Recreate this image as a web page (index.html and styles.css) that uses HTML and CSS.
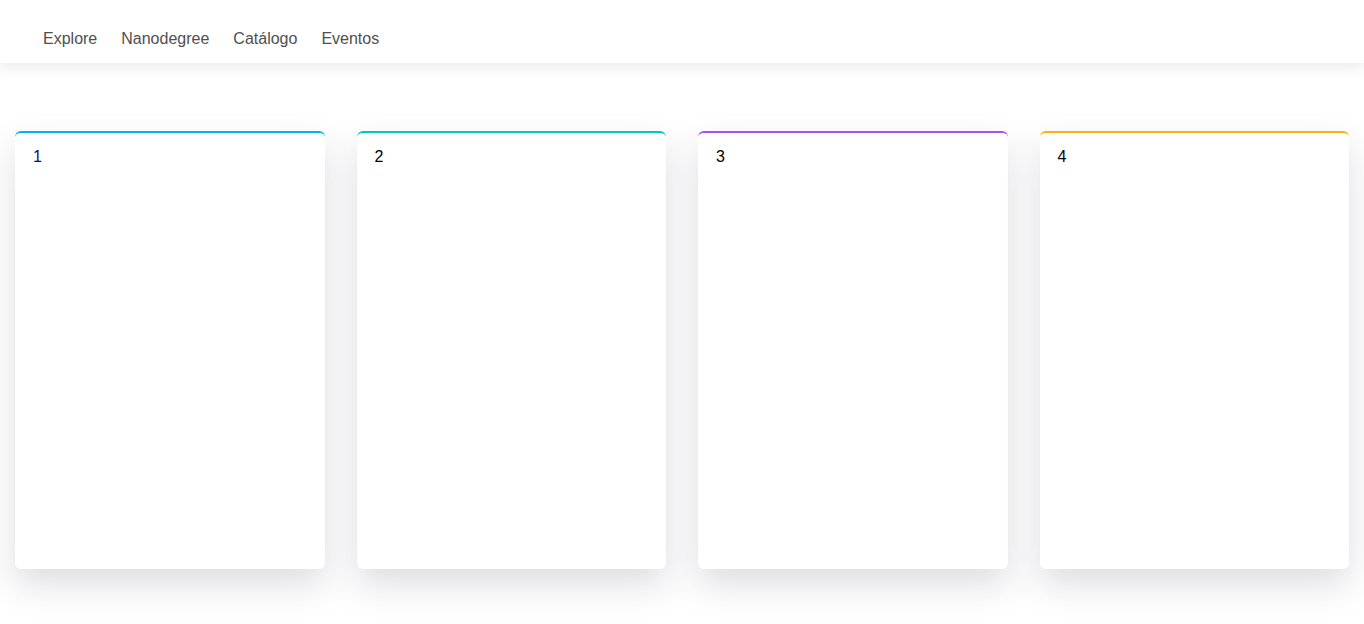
FILE: index.html
```html
<!DOCTYPE html>
<html lang="pt">
<head>
<meta charset="utf-8">
<title>Cards</title>
<link rel="stylesheet" href="styles.css">
</head>
<body>
<header class="nav">
  <a class="nav-link" href="#">Explore</a>
  <a class="nav-link" href="#">Nanodegree</a>
  <a class="nav-link" href="#">Catálogo</a>
  <a class="nav-link" href="#">Eventos</a>
</header>
<main class="cards">
  <section class="card card-blue"><span class="num num-first">1</span></section>
  <section class="card card-teal"><span class="num">2</span></section>
  <section class="card card-purple"><span class="num">3</span></section>
  <section class="card card-orange"><span class="num">4</span></section>
</main>
</body>
</html>
```
FILE: styles.css
```css
* { box-sizing: border-box; }
html, body { margin: 0; padding: 0; background: #fff; }
body { font-family: "Liberation Sans", Arial, sans-serif; font-size: 16px; min-height: 624px; }

.nav {
  height: 63px;
  display: flex;
  align-items: center;
  gap: 24px;
  padding: 15px 0 0 43px;
  background: #fff;
  box-shadow: 0 4px 14px rgba(40, 40, 70, 0.10);
  position: relative;
  z-index: 1;
}
.nav-link {
  color: #4f4f4f;
  text-decoration: none;
  font-size: 16px;
}

.cards {
  display: flex;
  gap: 32px;
  padding: 68px 15px 55px 15px;
}
.card {
  flex: 1;
  height: 438px;
  background: #fff;
  border-radius: 6px;
  border-top: 2px solid #02b3e4;
  padding: 15px 18px;
  box-shadow: 0 16px 34px rgba(60, 50, 80, 0.17);
}
.card-blue { border-top-color: #02b3e4; }
.card-teal { border-top-color: #02c9be; }
.card-purple { border-top-color: #a951ed; }
.card-orange { border-top-color: #fcb00c; }

.num { color: #000; font-size: 16px; line-height: 18px; }
.num-first { color: #0b0b80; }
```
